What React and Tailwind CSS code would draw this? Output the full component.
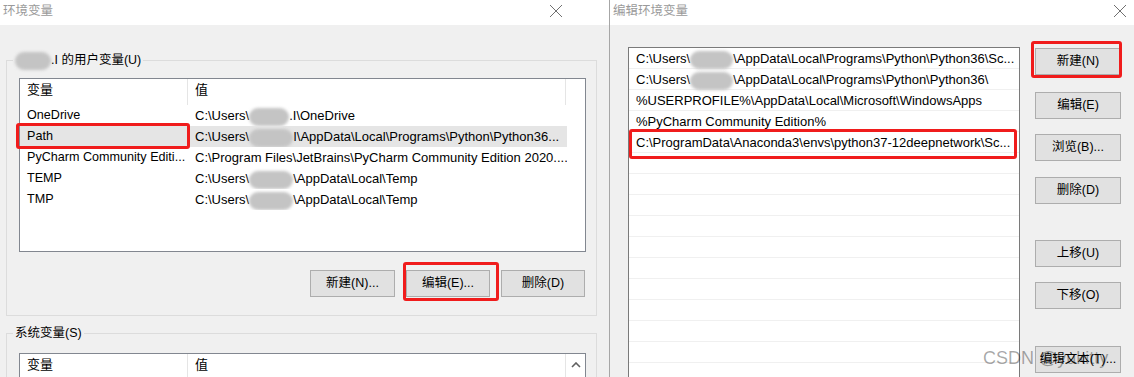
import React from 'react';

const FONT = { fontFamily: '"Liberation Sans", "Noto Sans CJK SC", Arial, sans-serif' };

function Blur({ w = 44 }) {
  return (
    <span
      className="inline-block align-middle h-[18px] -my-[3px] bg-[#c4c4c4] rounded-[9px] blur-[1.5px]"
      style={{ width: w }}
    />
  );
}

function CloseX() {
  return (
    <svg width="14" height="14" viewBox="0 0 14 14" className="shrink-0">
      <path d="M1 1 L13 13 M13 1 L1 13" stroke="#707070" strokeWidth="1" fill="none" />
    </svg>
  );
}

function TitleBar({ title, closeRight }) {
  return (
    <div className="h-[25px] bg-white flex items-center justify-between">
      <span className="text-[12.5px] text-[#9a9a9a] pl-[3px] pb-[3px]">{title}</span>
      <span className="pb-[4px]" style={{ marginRight: closeRight }}>
        <CloseX />
      </span>
    </div>
  );
}

function Btn({ children, className = '', red = null }) {
  return (
    <div className={`relative h-[27px] border border-[#adadad] bg-[#e1e1e1] flex items-center justify-center text-[12.5px] text-black ${className}`}>
      {children}
      {red && (
        <div
          className="absolute border-[3px] border-[#f01c1c] rounded-[3px]"
          style={red}
        />
      )}
    </div>
  );
}

const userVars = [
  { name: 'OneDrive', value: <>C:\Users\<Blur w={40} />.I\OneDrive</> },
  { name: 'Path', value: <>C:\Users\<Blur w={44} />I\AppData\Local\Programs\Python\Python36...</>, sel: true },
  { name: 'PyCharm Community Editi...', value: 'C:\\Program Files\\JetBrains\\PyCharm Community Edition 2020....' },
  { name: 'TEMP', value: <>C:\Users\<Blur w={44} />\AppData\Local\Temp</> },
  { name: 'TMP', value: <>C:\Users\<Blur w={44} />\AppData\Local\Temp</> },
];

const pathRows = [
  <>C:\Users\<Blur w={43} />\AppData\Local\Programs\Python\Python36\Sc...</>,
  <>C:\Users\<Blur w={43} />\AppData\Local\Programs\Python\Python36\</>,
  '%USERPROFILE%\\AppData\\Local\\Microsoft\\WindowsApps',
  '%PyCharm Community Edition%',
  'C:\\ProgramData\\Anaconda3\\envs\\python37-12deepnetwork\\Sc...',
];

function ListHeader({ scroll = false }) {
  return (
    <div className="h-[26px] flex text-[13px] text-black">
      <div className="w-[168px] border-r border-[#e5e5e5] pl-[7px] leading-[22px]">变量</div>
      <div className="w-[378px] border-r border-[#e5e5e5] pl-[7px] leading-[22px]">值</div>
      {scroll && (
        <div className="flex-1 flex items-start justify-center pt-[8px] bg-white">
          <svg width="10" height="6" viewBox="0 0 10 6">
            <path d="M1 5 L5 1 L9 5" stroke="#606060" strokeWidth="1.6" fill="none" />
          </svg>
        </div>
      )}
    </div>
  );
}

export default function App() {
  return (
    <div className="w-[1134px] h-[377px] overflow-hidden flex bg-[#f0f0f0] relative" style={FONT}>
      {/* 环境变量 */}
      <div className="w-[609px] flex flex-col">
        <TitleBar title="环境变量" closeRight={46} />
        <div className="flex-1 bg-[#f0f0f0] overflow-hidden">
          <fieldset className="ml-[6px] mt-[27px] w-[591px] border border-[#dcdcdc]">
            <legend className="ml-[6px] px-[2px] h-[16px] leading-[16px] text-[12.5px] text-black">
              <Blur w={36} />.I 的用户变量(U)
            </legend>
            <div className="ml-[12px] mt-[10px] w-[567px] h-[174px] border border-[#828790] bg-white">
              <ListHeader />
              {userVars.map((v) => (
                <div
                  key={v.name}
                  className={`relative h-[21px] w-[547px] flex text-[13px] text-black leading-[21px] ${v.sel ? 'bg-[#e5e5e5]' : ''}`}
                >
                  <div className="w-[168px] pl-[7px] whitespace-nowrap overflow-hidden text-[12.6px]">{v.name}</div>
                  <div className="flex-1 pl-[7px] whitespace-nowrap overflow-hidden">{v.value}</div>
                  {v.sel && (
                    <div className="absolute left-[-4px] top-[-3px] w-[174px] h-[26px] border-[3px] border-[#f01c1c] rounded-[3px]" />
                  )}
                </div>
              ))}
            </div>
            <div className="flex justify-end gap-[11px] mt-[18px] mb-[18px] mr-[11px]">
              <Btn className="w-[85px]">新建(N)...</Btn>
              <Btn className="w-[84px]" red={{ left: -4, top: -9, right: -10, bottom: -5 }}>编辑(E)...</Btn>
              <Btn className="w-[84px]">删除(D)</Btn>
            </div>
          </fieldset>
          <fieldset className="ml-[6px] mt-[9px] w-[591px] h-[120px] border border-[#dcdcdc]">
            <legend className="ml-[6px] px-[2px] h-[16px] leading-[16px] text-[12.5px] text-black">系统变量(S)</legend>
            <div className="ml-[12px] mt-[12px] w-[567px] h-[100px] border border-[#828790] bg-white">
              <ListHeader scroll />
            </div>
          </fieldset>
        </div>
      </div>

      <div className="w-px bg-[#a6a6a6]" />

      {/* 编辑环境变量 */}
      <div className="flex-1 flex flex-col">
        <TitleBar title="编辑环境变量" closeRight={7} />
        <div className="flex-1 bg-[#f0f0f0] flex overflow-hidden pl-[5px]">
          <div className="ml-[13px] mt-[22px] w-[392px] h-[400px] border border-[#7a7a7a] bg-white">
            {Array.from({ length: 16 }).map((_, i) => (
              <div
                key={i}
                className="relative h-[21px] border-b border-[#f0f0f0] pl-[7px] pt-[1px] leading-[20px] text-[13px] text-black whitespace-nowrap"
              >
                {pathRows[i] || ''}
                {i === 4 && (
                  <div className="absolute left-0 right-[2px] top-[-3px] bottom-[-7px] border-[3px] border-[#f01c1c] rounded-[3px]" />
                )}
              </div>
            ))}
          </div>
          <div className="ml-[15px] w-[86px] flex flex-col">
            <Btn className="mt-[23px]" red={{ left: -5, top: -8, right: -2, bottom: -4 }}>新建(N)</Btn>
            <Btn className="mt-[17px]">编辑(E)</Btn>
            <Btn className="mt-[15px]">浏览(B)...</Btn>
            <Btn className="mt-[16px]">删除(D)</Btn>
            <Btn className="mt-[36px]">上移(U)</Btn>
            <Btn className="mt-[15px]">下移(O)</Btn>
            <Btn className="mt-[37px]">编辑文本(T)...</Btn>
          </div>
        </div>
      </div>

      <div className="absolute left-[983px] top-[347px] text-[18px] leading-[22px] text-black/35 pointer-events-none">
        CSDN @yukitty
      </div>
    </div>
  );
}
